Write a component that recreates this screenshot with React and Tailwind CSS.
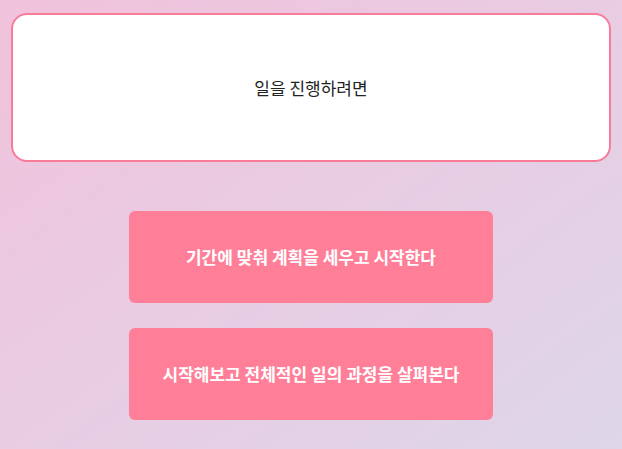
export default function App() {
    const choices = [
        "기간에 맞춰 계획을 세우고 시작한다",
        "시작해보고 전체적인 일의 과정을 살펴본다",
    ];

    return (
        <div
            className="min-h-screen w-full bg-gradient-to-br from-[#f1c2dc] to-[#ded6e9] pt-[13px]"
            style={{ fontFamily: '"Noto Sans CJK KR", "Noto Sans", sans-serif' }}
        >
            <div className="mx-auto w-[600px] h-[149px] bg-white border-2 border-[#f87b98] rounded-[16px] flex items-center justify-center">
                <p className="text-[17px] text-[#222]">일을 진행하려면</p>
            </div>

            <div className="mt-[49px] flex flex-col items-center gap-[25px]">
                {choices.map((text) => (
                    <button
                        key={text}
                        className="w-[364px] h-[92px] bg-[#ff7f99] rounded-[6px] text-white text-[17px] font-semibold flex items-center justify-center"
                    >
                        {text}
                    </button>
                ))}
            </div>
        </div>
    );
}
